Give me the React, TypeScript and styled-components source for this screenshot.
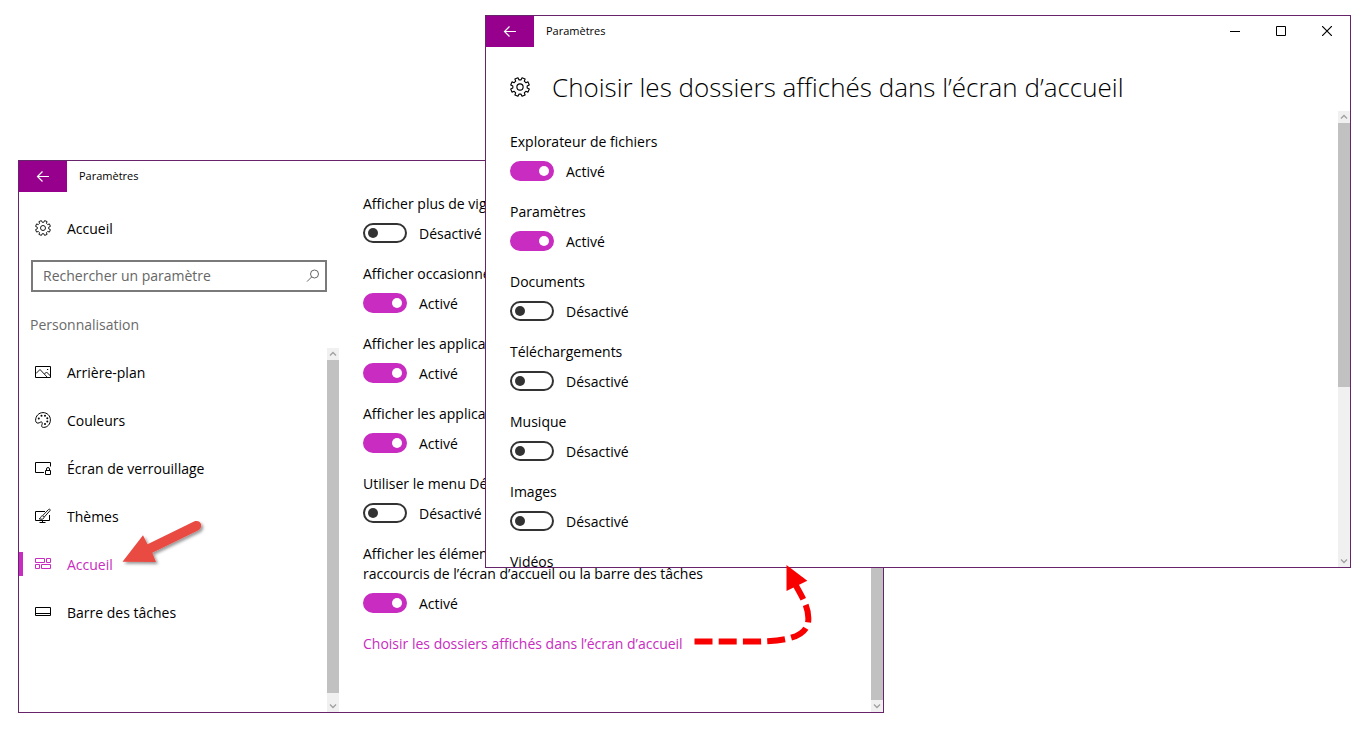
import React, { useState } from 'react';
import styled, { createGlobalStyle, css } from 'styled-components';

const ACCENT = '#c82cc0';
const TITLE = '#96008c';
const FRAME = '#68246a';

const GlobalStyle = createGlobalStyle`
  *, *::before, *::after { box-sizing: border-box; }
  body {
    margin: 0;
    background: #fff;
    color: #000;
    font: 14px/20px "Open Sans", "Noto Sans", sans-serif;
  }
  button, input { font: inherit; color: inherit; }
`;

const Desktop = styled.main`
  position: relative;
  height: 100vh;
  min-height: 600px;
  min-width: 1000px;
  overflow: hidden;
`;

const Window = styled.section<{ $front?: boolean }>`
  position: absolute;
  display: flex;
  flex-direction: column;
  background: #fff;
  border: 1px solid ${FRAME};
  overflow: hidden;
  ${({ $front }) =>
    $front
      ? css`
          top: 15px;
          right: 14px;
          bottom: 167px;
          left: 485px;
        `
      : css`
          top: 160px;
          right: 481px;
          bottom: 22px;
          left: 18px;
        `}
`;

const TitleBar = styled.header`
  display: flex;
  flex: none;
  height: 31px;
`;

const BackButton = styled.button`
  display: grid;
  place-items: center;
  width: 48px;
  padding: 0;
  border: 0;
  background: ${TITLE};
  color: #fff;
`;

const Title = styled.span`
  flex: 1;
  padding-left: 12px;
  font-size: 11px;
  line-height: 30px;
`;

const CaptionButton = styled.button`
  display: grid;
  place-items: center;
  width: 46px;
  height: 30px;
  padding: 0;
  border: 0;
  background: none;
`;

const Columns = styled.div`
  display: flex;
  flex: 1;
  min-height: 0;
`;

const Sidebar = styled.aside`
  display: flex;
  flex: none;
  flex-direction: column;
  width: 320px;
`;

const RowText = styled.span`
  padding-top: 2px;
`;

const navRow = css`
  display: flex;
  align-items: center;
  gap: 16px;
  height: 48px;
  padding-left: 16px;
  text-decoration: none;
`;

const HomeLink = styled.a`
  ${navRow}
  margin-top: 12px;
  color: #000;
`;

const SearchBox = styled.label`
  display: flex;
  align-items: center;
  height: 32px;
  margin: 8px 12px 0;
  padding: 0 4px 0 10px;
  border: 2px solid #7a7a7a;
`;

const SearchInput = styled.input`
  flex: 1;
  min-width: 0;
  padding: 0;
  border: 0;
  outline: 0;
  background: none;
  &::placeholder {
    color: #666;
    opacity: 1;
  }
`;

const GroupName = styled.h2`
  margin: 23px 0 13px 11px;
  color: #6a6a6a;
  font-size: 14px;
  font-weight: 400;
  line-height: 20px;
`;

const NavArea = styled.div`
  display: flex;
  flex: 1;
  min-height: 0;
`;

const NavList = styled.nav`
  flex: 1;
`;

const NavLink = styled.a<{ $active?: boolean }>`
  ${navRow}
  color: ${({ $active }) => ($active ? ACCENT : '#000')};
  background: ${({ $active }) =>
    $active ? `linear-gradient(${ACCENT}, ${ACCENT}) left / 4px 24px no-repeat` : 'none'};
`;

const Pane = styled.div<{ $first?: boolean }>`
  flex: 1;
  min-width: 0;
  overflow: hidden;
  padding: ${({ $first }) => ($first ? '21px 24px 0' : '2px 24px 0')};
`;

const Setting = styled.div`
  display: flex;
  flex-direction: column;
  align-items: flex-start;
  gap: 9px;
  max-width: 360px;
  margin-bottom: 21px;
`;

const SettingName = styled.span`
  line-height: 20px;
`;

const SwitchRow = styled.label`
  display: flex;
  align-items: center;
  gap: 12px;
  height: 20px;
`;

const SwitchInput = styled.input`
  appearance: none;
  display: flex;
  align-items: center;
  flex: none;
  width: 44px;
  height: 20px;
  margin: 0;
  padding: 0 3px;
  border: 2px solid #333;
  border-radius: 10px;
  &::before {
    content: '';
    width: 10px;
    height: 10px;
    border-radius: 50%;
    background: #333;
  }
  &:checked {
    justify-content: flex-end;
    border-color: ${ACCENT};
    background: ${ACCENT};
  }
  &:checked::before {
    background: #fff;
  }
`;

const TextLink = styled.a`
  color: ${ACCENT};
  text-decoration: none;
`;

const PageHeader = styled.header`
  display: flex;
  flex: none;
  align-items: center;
  gap: 22px;
  height: 64px;
  padding: 16px 24px 0;
`;

const PageTitle = styled.h1`
  margin: 0;
  font-size: 26px;
  font-weight: 300;
  line-height: 40px;
  white-space: nowrap;
`;

const ScrollTrack = styled.div`
  display: flex;
  flex: none;
  flex-direction: column;
  width: 12px;
  background: #f0f0f0;
`;

const ScrollButton = styled.button`
  display: grid;
  place-items: center;
  height: 12px;
  padding: 0;
  border: 0;
  background: none;
`;

const ScrollSpace = styled.div<{ $end?: boolean }>`
  display: flex;
  flex: 1;
  flex-direction: column;
  justify-content: ${({ $end }) => ($end ? 'flex-end' : 'flex-start')};
`;

const ScrollThumb = styled.div<{ $size: number }>`
  height: ${({ $size }) => $size}%;
  background: #c1c1c1;
`;

const Annotation = styled.svg<{ $x: number; $y: number }>`
  position: absolute;
  left: ${({ $x }) => $x}px;
  top: ${({ $y }) => $y}px;
  overflow: visible;
  pointer-events: none;
`;

const Glyph = ({ children, size = 16 }: { children: React.ReactNode; size?: number }) => (
  <svg width={size} height={size} viewBox="0 0 16 16" fill="none" stroke="currentColor" aria-hidden="true">
    {children}
  </svg>
);

const gearPath = (() => {
  const points: string[] = [];
  const add = (r: number, deg: number) => {
    const a = (deg * Math.PI) / 180;
    points.push(`${(8 + r * Math.cos(a)).toFixed(2)} ${(8 + r * Math.sin(a)).toFixed(2)}`);
  };
  for (let tooth = 0; tooth < 8; tooth += 1) {
    const c = 22.5 + tooth * 45;
    add(5.8, c - 14);
    add(7.6, c - 10);
    add(7.6, c + 10);
    add(5.8, c + 14);
  }
  return `M${points.join('L')}Z`;
})();

const Gear = ({ size = 16 }: { size?: number }) => (
  <Glyph size={size}>
    <path d={gearPath} strokeWidth="0.9" strokeLinejoin="round" />
    <circle cx="8" cy="8" r="2.5" strokeWidth="0.9" />
  </Glyph>
);

const icons: Record<string, React.ReactNode> = {
  picture: (
    <Glyph>
      <path d="M.5 2.5h15v11H.5z" />
      <path d="M1 9.5 5 5.5l7.5 8M9.5 10l2-2 4 4" strokeWidth=".9" />
      <path d="M12 5.5h1.2" />
    </Glyph>
  ),
  palette: (
    <Glyph>
      <path d="M8 .6c4.200 0 7.400 3.200 7.400 7.300 0 4.300-3 7.500-6.800 7.500-1.500 0-2.200-.7-1.900-1.900.4-1.700.9-2.200.4-3.100-.6-1-1.800-.2-2.900.4C2.500 11.700.6 10.800.6 8.400.6 4 3.800.6 8 .6Z" />
      <g fill="currentColor" stroke="none">
        <circle cx="3.8" cy="6.5" r="1" />
        <circle cx="6.5" cy="3.8" r="1" />
        <circle cx="10" cy="3.8" r="1" />
        <circle cx="12.3" cy="6.3" r="1" />
        <circle cx="12.3" cy="9.5" r="1" />
        <circle cx="10" cy="12" r="1" />
      </g>
    </Glyph>
  ),
  lock: (
    <Glyph>
      <path d="M9 12.5H.5v-10h15v4" />
      <path d="M10.5 10.5h5v4h-5zM11.5 10.5V9a1.500 1.500 0 0 1 3 0v1.500" />
    </Glyph>
  ),
  themes: (
    <Glyph>
      <path d="M10 3.5H.5v9h14V7M7.5 12.5v2M4.5 14.5h6" />
      <path
        d="M14.800 1.300c.6.5.5 1-.1 1.700L9.300 9 7.700 7.600l5.600-5.900c.6-.6 1-.8 1.500-.4Z"
        strokeWidth=".9"
      />
      <path d="M7.500 8c-1.600.1-1.900 1.200-2.100 2-.1.500-.6.700-1.200.8 2 .9 4.600.6 4.900-1.600" strokeWidth=".9" />
    </Glyph>
  ),
  start: (
    <Glyph>
      <path d="M.5 2.5h9v4h-9zM11.5 2.5h4v4h-4zM.5 8.5h4v4h-4zM6.5 8.5h9v4h-9z" />
    </Glyph>
  ),
  taskbar: (
    <Glyph>
      <path d="M.5 3.5h15v8H.5zM0 9.5h16" />
    </Glyph>
  ),
};

const BackArrow = () => (
  <Glyph>
    <path d="M14 7.5H2.5M7.5 2.5l-5 5 5 5" strokeWidth="1.2" />
  </Glyph>
);

const SearchIcon = () => (
  <Glyph>
    <circle cx="9.5" cy="6" r="4" stroke="#666" />
    <path d="M6.700 8.900 2 13.600" stroke="#666" />
  </Glyph>
);

const Scrollbar = ({ size, end }: { size: number; end?: boolean }) => (
  <ScrollTrack>
    <ScrollButton aria-label="Défiler vers le haut">
      <svg width="8" height="6" viewBox="0 0 8 6" fill="none" stroke="#a0a0a0" strokeWidth="1.3">
        <path d="m1 4.500 3-3 3 3" />
      </svg>
    </ScrollButton>
    <ScrollSpace $end={end}>
      <ScrollThumb $size={size} />
    </ScrollSpace>
    <ScrollButton aria-label="Défiler vers le bas">
      <svg width="8" height="6" viewBox="0 0 8 6" fill="none" stroke="#a0a0a0" strokeWidth="1.3">
        <path d="m1 1.500 3 3 3-3" />
      </svg>
    </ScrollButton>
  </ScrollTrack>
);

const Switch = ({ name, initial }: { name: string; initial: boolean }) => {
  const [on, setOn] = useState(initial);
  return (
    <Setting role="group" aria-label={name}>
      <SettingName>{name}</SettingName>
      <SwitchRow>
        <SwitchInput type="checkbox" role="switch" checked={on} onChange={() => setOn(!on)} />
        <RowText>{on ? 'Activé' : 'Désactivé'}</RowText>
      </SwitchRow>
    </Setting>
  );
};

const navItems = [
  { icon: 'picture', text: 'Arrière-plan' },
  { icon: 'palette', text: 'Couleurs' },
  { icon: 'lock', text: 'Écran de verrouillage' },
  { icon: 'themes', text: 'Thèmes' },
  { icon: 'start', text: 'Accueil', active: true },
  { icon: 'taskbar', text: 'Barre des tâches' },
];

const startSettings: [string, boolean][] = [
  ['Afficher plus de vignettes', false],
  ['Afficher occasionnellement des suggestions', true],
  ['Afficher les applications les plus utilisées', true],
  ['Afficher les applications récemment ajoutées', true],
  ['Utiliser le menu Démarrer en plein écran', false],
  ['Afficher les éléments récemment ouverts dans les raccourcis de l’écran d’accueil ou la barre des tâches', true],
];

const folders: [string, boolean][] = [
  ['Explorateur de fichiers', true],
  ['Paramètres', true],
  ['Documents', false],
  ['Téléchargements', false],
  ['Musique', false],
  ['Images', false],
  ['Vidéos', false],
];

export default function App() {
  return (
    <Desktop>
      <GlobalStyle />
      <Window aria-label="Personnalisation">
        <TitleBar>
          <BackButton aria-label="Retour">
            <BackArrow />
          </BackButton>
          <Title>Paramètres</Title>
        </TitleBar>
        <Columns>
          <Sidebar>
            <HomeLink href="#home">
              <Gear />
              <RowText>Accueil</RowText>
            </HomeLink>
            <SearchBox>
              <SearchInput type="text" placeholder="Rechercher un paramètre" aria-label="Rechercher un paramètre" />
              <SearchIcon />
            </SearchBox>
            <GroupName>Personnalisation</GroupName>
            <NavArea>
              <NavList>
                {navItems.map(({ icon, text, active }) => (
                  <NavLink key={text} href={`#${icon}`} $active={active}>
                    {icons[icon]}
                    <RowText>{text}</RowText>
                  </NavLink>
                ))}
              </NavList>
              <Scrollbar size={98} />
            </NavArea>
          </Sidebar>
          <Pane>
            {startSettings.map(([name, on]) => (
              <Switch key={name} name={name} initial={on} />
            ))}
            <TextLink href="#folders">Choisir les dossiers affichés dans l’écran d’accueil</TextLink>
          </Pane>
          <Scrollbar size={80} end />
        </Columns>
      </Window>

      <Window $front aria-label="Choisir les dossiers">
        <TitleBar>
          <BackButton aria-label="Retour">
            <BackArrow />
          </BackButton>
          <Title>Paramètres</Title>
          <CaptionButton aria-label="Réduire">
            <svg width="10" height="10" stroke="#000">
              <path d="M0 5.500h10" />
            </svg>
          </CaptionButton>
          <CaptionButton aria-label="Agrandir">
            <svg width="10" height="10" stroke="#000" fill="none">
              <path d="M.5.5h9v9h-9z" />
            </svg>
          </CaptionButton>
          <CaptionButton aria-label="Fermer">
            <svg width="10" height="10" stroke="#000" strokeWidth="1.2">
              <path d="m0 0 10 10M10 0 0 10" />
            </svg>
          </CaptionButton>
        </TitleBar>
        <PageHeader>
          <Gear size={20} />
          <PageTitle>Choisir les dossiers affichés dans l’écran d’accueil</PageTitle>
        </PageHeader>
        <Columns>
          <Pane $first>
            {folders.map(([name, on]) => (
              <Switch key={name} name={name} initial={on} />
            ))}
          </Pane>
          <Scrollbar size={61} />
        </Columns>
      </Window>

      <Annotation $x={122} $y={520} width="82" height="46" aria-hidden="true">
        <defs>
          <filter id="drop" x="-20%" y="-20%" width="150%" height="160%">
            <feDropShadow dx="2" dy="2" stdDeviation="1.5" floodColor="#000" floodOpacity=".4" />
          </filter>
        </defs>
        <path
          d="M.5 41.800 21 15.300l4.500 9L72 1.500c7-2.500 10 6 4 9L30.300 32.700l3.700 9.300Z"
          fill="#e94b43"
          filter="url(#drop)"
        />
      </Annotation>

      <Annotation $x={690} $y={562} width="124" height="86" aria-hidden="true">
        <path
          d="M4.500 79.500H62C100 79.500 115 74 118 61C120 48 114 38 105 22"
          fill="none"
          stroke="#f80000"
          strokeWidth="6"
          strokeDasharray="18 6.200"
        />
        <path d="M96.500 3 117.300 18.700 96.500 29Z" fill="#f80000" />
      </Annotation>
    </Desktop>
  );
}
